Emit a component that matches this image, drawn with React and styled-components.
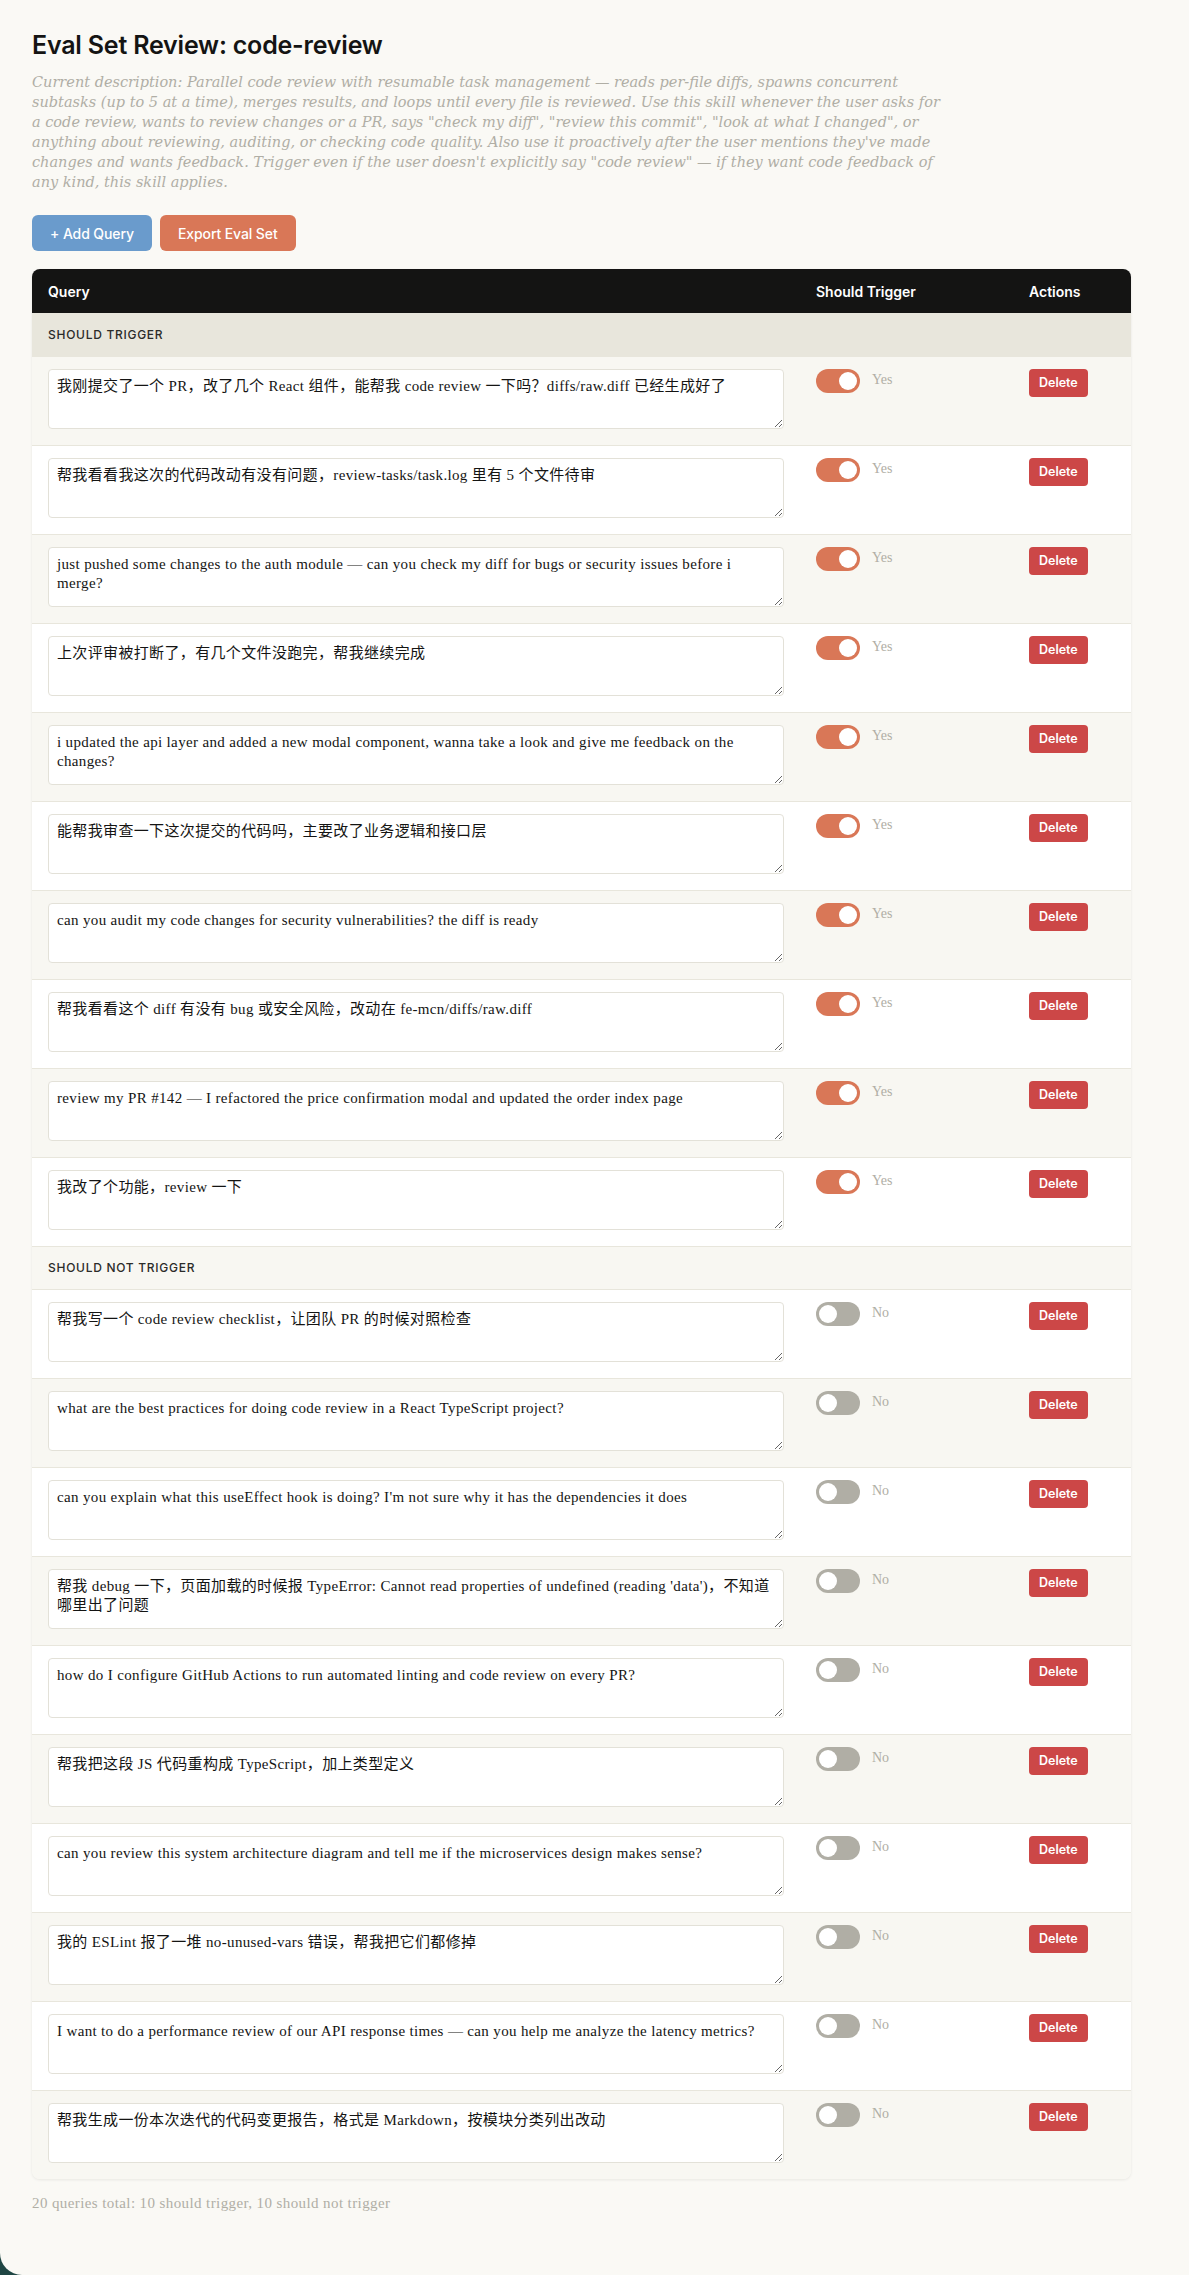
import React from "react";
import styled, { createGlobalStyle } from "styled-components";

const GlobalStyle = createGlobalStyle`
  html, body {
    margin: 0;
    padding: 0;
    background: #1f4644;
  }
  * { box-sizing: border-box; }
`;

const Page = styled.div`
  min-height: 100vh;
  background: #faf9f5;
  border-bottom-left-radius: 22px;
  padding: 30px 32px 40px;
  font-family: "Liberation Serif", "Noto Sans CJK SC", serif;
  color: #141413;
`;

const Content = styled.div`
  max-width: 1099px;
`;

const Title = styled.h1`
  margin: 0 0 12px;
  font-family: "Inter", "Noto Sans", sans-serif;
  font-weight: 600;
  font-size: 25px;
  line-height: 30px;
  letter-spacing: -0.2px;
  color: #141413;
`;

const Description = styled.p`
  margin: 0 0 23px;
  max-width: 910px;
  font-family: "DejaVu Serif", serif;
  font-style: italic;
  font-size: 14.5px;
  line-height: 20px;
  color: #b0aea5;
`;

const Toolbar = styled.div`
  display: flex;
  gap: 8px;
  margin-bottom: 18px;
`;

const ActionButton = styled.button`
  height: 36px;
  padding: 0 18px;
  border: none;
  border-radius: 6px;
  background: ${(p) => p.$bg};
  color: #ffffff;
  font-family: "Inter", "Noto Sans", sans-serif;
  font-weight: 500;
  font-size: 14px;
  letter-spacing: -0.1px;
  cursor: pointer;
`;

const TableWrap = styled.div`
  border-radius: 8px;
  overflow: hidden;
  box-shadow: 0 1px 3px rgba(20, 20, 19, 0.08);
`;

const Table = styled.table`
  width: 100%;
  border-collapse: collapse;
  table-layout: fixed;
`;

const HeadCell = styled.th`
  height: 44px;
  padding: 0 16px;
  background: #141413;
  color: #ffffff;
  text-align: left;
  font-family: "Inter", "Noto Sans", sans-serif;
  font-weight: 600;
  font-size: 14px;
`;

const SectionRow = styled.tr`
  background: ${(p) => p.$bg};
  border-bottom: 1px solid #e8e6dc;
`;

const SectionCell = styled.td`
  height: 43px;
  padding: 0 16px;
  font-family: "Inter", "Noto Sans", sans-serif;
  font-weight: 500;
  font-size: 12px;
  letter-spacing: 0.06em;
  text-transform: uppercase;
  color: #2b2b29;
`;

const Row = styled.tr`
  background: ${(p) => (p.$alt ? "#f8f7f2" : "#ffffff")};
  border-bottom: ${(p) => (p.$last ? "none" : "1px solid #e8e6dc")};
`;

const Cell = styled.td`
  padding: 12px 16px 16px;
  vertical-align: top;
`;

const QueryInput = styled.textarea`
  display: block;
  width: 100%;
  height: 60px;
  padding: 7px 8px;
  border: 1px solid #e3e1d8;
  border-radius: 4px;
  background: #ffffff;
  resize: vertical;
  font-family: "Liberation Serif", "Noto Sans CJK SC", serif;
  font-size: 15px;
  letter-spacing: 0.35px;
  line-height: 19px;
  color: #141413;
  outline: none;
`;

const ToggleWrap = styled.div`
  display: flex;
  align-items: center;
  gap: 12px;
`;

const Switch = styled.button`
  position: relative;
  width: 44px;
  height: 24px;
  padding: 0;
  border: none;
  border-radius: 12px;
  background: ${(p) => (p.$on ? "#d97757" : "#b0aea5")};
  cursor: pointer;

  &::after {
    content: "";
    position: absolute;
    top: 3px;
    left: ${(p) => (p.$on ? "23px" : "3px")};
    width: 18px;
    height: 18px;
    border-radius: 50%;
    background: #ffffff;
  }
`;

const ToggleLabel = styled.span`
  font-family: "Liberation Serif", serif;
  font-size: 14px;
  color: #b0aea5;
  margin-top: -2px;
`;

const DeleteButton = styled.button`
  height: 28px;
  padding: 0 10px;
  border: none;
  border-radius: 4px;
  background: #cc4747;
  color: #ffffff;
  font-family: "Inter", "Noto Sans", sans-serif;
  font-weight: 600;
  font-size: 12.5px;
  cursor: pointer;
`;

const Footer = styled.p`
  margin: 16px 0 0;
  font-family: "Liberation Serif", serif;
  font-size: 15px;
  letter-spacing: 0.4px;
  color: #b0aea5;
`;

const description =
  'Current description: Parallel code review with resumable task management — reads per-file diffs, spawns concurrent subtasks (up to 5 at a time), merges results, and loops until every file is reviewed. Use this skill whenever the user asks for a code review, wants to review changes or a PR, says "check my diff", "review this commit", "look at what I changed", or anything about reviewing, auditing, or checking code quality. Also use it proactively after the user mentions they\'ve made changes and wants feedback. Trigger even if the user doesn\'t explicitly say "code review" — if they want code feedback of any kind, this skill applies.';

const shouldTrigger = [
  "我刚提交了一个 PR，改了几个 React 组件，能帮我 code review 一下吗？diffs/raw.diff 已经生成好了",
  "帮我看看我这次的代码改动有没有问题，review-tasks/task.log 里有 5 个文件待审",
  "just pushed some changes to the auth module — can you check my diff for bugs or security issues before i merge?",
  "上次评审被打断了，有几个文件没跑完，帮我继续完成",
  "i updated the api layer and added a new modal component, wanna take a look and give me feedback on the changes?",
  "能帮我审查一下这次提交的代码吗，主要改了业务逻辑和接口层",
  "can you audit my code changes for security vulnerabilities? the diff is ready",
  "帮我看看这个 diff 有没有 bug 或安全风险，改动在 fe-mcn/diffs/raw.diff",
  "review my PR #142 — I refactored the price confirmation modal and updated the order index page",
  "我改了个功能，review 一下",
];

const shouldNotTrigger = [
  "帮我写一个 code review checklist，让团队 PR 的时候对照检查",
  "what are the best practices for doing code review in a React TypeScript project?",
  "can you explain what this useEffect hook is doing? I'm not sure why it has the dependencies it does",
  "帮我 debug 一下，页面加载的时候报 TypeError: Cannot read properties of undefined (reading 'data')，不知道哪里出了问题",
  "how do I configure GitHub Actions to run automated linting and code review on every PR?",
  "帮我把这段 JS 代码重构成 TypeScript，加上类型定义",
  "can you review this system architecture diagram and tell me if the microservices design makes sense?",
  "我的 ESLint 报了一堆 no-unused-vars 错误，帮我把它们都修掉",
  "I want to do a performance review of our API response times — can you help me analyze the latency metrics?",
  "帮我生成一份本次迭代的代码变更报告，格式是 Markdown，按模块分类列出改动",
];

function QueryRow({ text, on, alt, last }) {
  return (
    <Row $alt={alt} $last={last}>
      <Cell>
        <QueryInput defaultValue={text} />
      </Cell>
      <Cell>
        <ToggleWrap>
          <Switch $on={on} aria-label="toggle" />
          <ToggleLabel>{on ? "Yes" : "No"}</ToggleLabel>
        </ToggleWrap>
      </Cell>
      <Cell>
        <DeleteButton>Delete</DeleteButton>
      </Cell>
    </Row>
  );
}

export default function App() {
  return (
    <>
      <GlobalStyle />
      <Page>
        <Content>
          <Title>Eval Set Review: code-review</Title>
          <Description>{description}</Description>
          <Toolbar>
            <ActionButton $bg="#6a9bcc">+ Add Query</ActionButton>
            <ActionButton $bg="#d97757">Export Eval Set</ActionButton>
          </Toolbar>
          <TableWrap>
            <Table>
              <colgroup>
                <col style={{ width: "768px" }} />
                <col style={{ width: "213px" }} />
                <col />
              </colgroup>
              <thead>
                <tr>
                  <HeadCell>Query</HeadCell>
                  <HeadCell>Should Trigger</HeadCell>
                  <HeadCell>Actions</HeadCell>
                </tr>
              </thead>
              <tbody>
                <SectionRow $bg="#e8e6dc">
                  <SectionCell colSpan={3}>Should Trigger</SectionCell>
                </SectionRow>
                {shouldTrigger.map((q, i) => (
                  <QueryRow key={"t" + i} text={q} on alt={i % 2 === 0} />
                ))}
                <SectionRow $bg="#f8f7f2">
                  <SectionCell colSpan={3}>Should Not Trigger</SectionCell>
                </SectionRow>
                {shouldNotTrigger.map((q, i) => (
                  <QueryRow
                    key={"n" + i}
                    text={q}
                    on={false}
                    alt={i % 2 === 1}
                    last={i === shouldNotTrigger.length - 1}
                  />
                ))}
              </tbody>
            </Table>
          </TableWrap>
          <Footer>20 queries total: 10 should trigger, 10 should not trigger</Footer>
        </Content>
      </Page>
    </>
  );
}
